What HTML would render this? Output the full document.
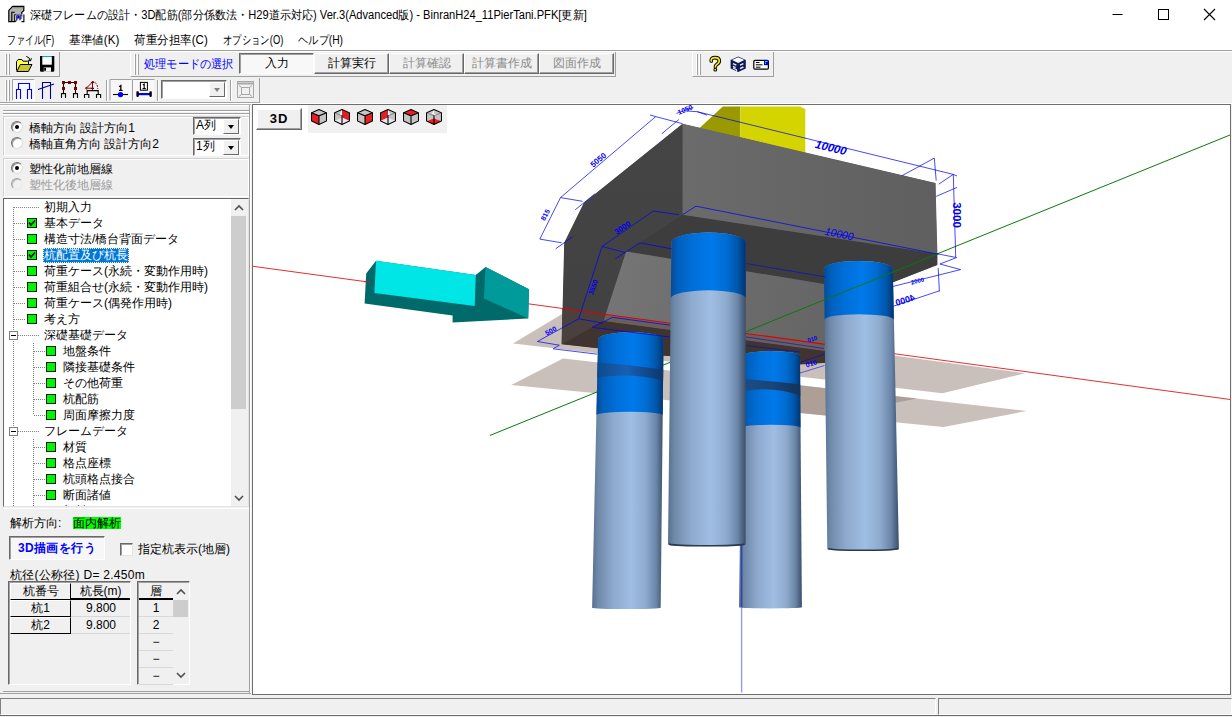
<!DOCTYPE html>
<html lang="ja">
<head>
<meta charset="utf-8">
<title>深礎フレームの設計・3D配筋</title>
<style>
*{box-sizing:border-box;margin:0;padding:0}
html,body{width:1232px;height:717px;overflow:hidden;background:#f0f0f0;font-family:"Liberation Sans",sans-serif;font-size:12px;color:#000}
.abs{position:absolute}
#titlebar{position:absolute;left:0;top:0;width:1232px;height:30px;background:#fff}
#titletext{position:absolute;left:30px;top:7px;font-size:12px;line-height:16px;white-space:nowrap;transform:scaleX(0.927);transform-origin:0 0}
#menubar{position:absolute;left:0;top:30px;width:1232px;height:20px;background:#fff}
#menubar span{position:absolute;top:2px;font-size:12px;line-height:16px;white-space:nowrap;transform-origin:0 0}
.hline{position:absolute;left:0;width:1232px;height:1px}
.band{position:absolute;border-right:1px solid #a0a0a0;border-bottom:1px solid #a0a0a0}
.grip{position:absolute;width:1px;background:#a0a0a0;box-shadow:-1px 0 0 #fff}
.tbtn{position:absolute;height:21px;top:53px;font-size:12px;line-height:19px;text-align:center;background:#f0f0f0;border:1px solid;border-color:#fff #696969 #696969 #fff;box-shadow:inset -1px -1px 0 #a0a0a0;white-space:nowrap;overflow:hidden}
.tbtn.dis{color:#8a8a8a}
.tbtn.down{border-color:#696969 #fff #fff #696969;box-shadow:inset 1px 1px 0 #a0a0a0;background:#f8f8f8}
#leftpanel{position:absolute;left:0;top:105px;width:251px;height:588px;background:#f0f0f0}
.t12{position:absolute;font-size:12px;line-height:14px;white-space:nowrap}
.radio{position:absolute;width:12px;height:12px;border-radius:50%;background:#fff;border:1px solid;border-color:#707070 #dcdcdc #dcdcdc #707070;box-shadow:inset 1px 1px 0 #9a9a9a}
.radio.on::after{content:"";position:absolute;left:3px;top:3px;width:4px;height:4px;border-radius:50%;background:#000}
.radio.dis{background:#f0f0f0;border-color:#a0a0a0 #e8e8e8 #e8e8e8 #a0a0a0;box-shadow:inset 1px 1px 0 #c0c0c0}
.combo{position:absolute;height:19px;background:#fff;border:1px solid;border-color:#696969 #fff #fff #696969;box-shadow:inset 1px 1px 0 #a0a0a0}
.combo .arr{position:absolute;right:1px;top:1px;width:16px;height:15px;background:#f0f0f0;border:1px solid;border-color:#fff #696969 #696969 #fff}
.combo .arr::after{content:"";position:absolute;left:4px;top:5px;border:3px solid transparent;border-top:4px solid #000;border-bottom:0}
.combo.gray .arr::after{border-top-color:#808080}
.sunk{border:1px solid;border-color:#808080 #fff #fff #808080}
.tree .row{position:absolute;left:0;height:16px;white-space:nowrap;font-size:12px;line-height:16px}
.gsq{position:absolute;width:10px;height:10px;background:#00f400;border:1px solid #002800}
.dot-h{position:absolute;height:1px;background-image:linear-gradient(90deg,#808080 50%,transparent 50%);background-size:2px 1px}
.dot-v{position:absolute;width:1px;background-image:linear-gradient(180deg,#808080 50%,transparent 50%);background-size:1px 2px}
#view{position:absolute;left:252px;top:104px;width:979px;height:591px;background:#fff;border:1px solid #6e6e6e;overflow:hidden}
</style>
</head>
<body>
<!-- ===== title bar ===== -->
<div id="titlebar">
  <svg class="abs" style="left:6px;top:4px" width="20" height="20" viewBox="6 4 20 20">
    <path d="M8.8,21.6 V10.4 L12.6,6.3 H23.8 V10.6 L21.8,12.2 V14.8 H14.8 V21.6 Z" fill="#b4b4b4" stroke="#000" stroke-width="1.2" stroke-linejoin="miter"/>
    <path d="M12.8,6.9 H23.2 V8.2 H11.6 Z" fill="#8c8c8c"/>
    <path d="M11.8,21 V12.2 H14.8" fill="none" stroke="#000" stroke-width="1.1"/>
    <rect x="15.6" y="14.6" width="8.2" height="6.8" fill="#f6f6f6"/>
    <path d="M21.5,21.6 H23.9 V14.6 M15.2,21.6 L16.5,20.4" fill="none" stroke="#000" stroke-width="1.1"/>
    <path d="M16.8,20.2 V15.8 H18.6 V17.8 H16.8 M20,20.2 V15.8 H22.4 M20,18 H22" fill="none" stroke="#0000a0" stroke-width="1.15"/>
  </svg>
  <div id="titletext">深礎フレームの設計・3D配筋(部分係数法・H29道示対応) Ver.3(Advanced版) - BinranH24_11PierTani.PFK[更新]</div>
  <svg class="abs" style="left:1100px;top:0" width="132" height="30" viewBox="0 0 132 30">
    <path d="M12.5 14.5 H22.5" stroke="#000" stroke-width="1" fill="none"/>
    <rect x="58.5" y="9.5" width="10" height="10" stroke="#000" stroke-width="1" fill="none"/>
    <path d="M104 9 L115 20 M115 9 L104 20" stroke="#000" stroke-width="1.1" fill="none"/>
  </svg>
</div>
<!-- ===== menu bar ===== -->
<div id="menubar">
  <span style="left:7px;transform:scaleX(0.745)">ファイル(F)</span>
  <span style="left:69px;transform:scaleX(0.967)">基準値(K)</span>
  <span style="left:134px;transform:scaleX(0.962)">荷重分担率(C)</span>
  <span style="left:222.5px;transform:scaleX(0.78)">オプション(O)</span>
  <span style="left:298px;transform:scaleX(0.855)">ヘルプ(H)</span>
</div>
<div class="hline" style="top:50px;background:#a0a0a0"></div>
<div class="hline" style="top:51px;background:#fff"></div>

<!-- ===== toolbar row 1 ===== -->
<div class="band" style="left:0;top:52px;width:60px;height:25px"></div>
<div class="grip" style="left:6px;top:54px;height:21px"></div>
<div class="grip" style="left:9px;top:54px;height:21px"></div>
<div class="band" style="left:130px;top:52px;width:486px;height:25px;border-left:1px solid #fff"></div>
<div class="grip" style="left:135px;top:54px;height:21px"></div>
<div class="grip" style="left:138px;top:54px;height:21px"></div>
<div class="t12" style="left:144px;top:57px;color:#0000ff;font-size:12px;line-height:15px;transform:scaleX(0.934);transform-origin:0 0">処理モードの選択</div>
<div class="tbtn down" style="left:239px;width:75px">入力</div>
<div class="tbtn" style="left:314px;width:75px">計算実行</div>
<div class="tbtn dis" style="left:389px;width:75px">計算確認</div>
<div class="tbtn dis" style="left:464px;width:75px">計算書作成</div>
<div class="tbtn dis" style="left:539px;width:75px">図面作成</div>
<div class="band" style="left:692px;top:52px;width:82px;height:25px;border-left:1px solid #fff"></div>
<div class="grip" style="left:697px;top:54px;height:21px"></div>
<div class="grip" style="left:700px;top:54px;height:21px"></div>

<svg class="abs" style="left:0;top:50px" width="1232" height="54" viewBox="0 50 1232 54">
  <!-- open folder -->
  <path d="M16.5,70.5 V61.5 L18.2,59.5 H21.8 L23,61.2 H28.5 V64.5" fill="#ffff50" stroke="#000" stroke-width="1"/>
  <path d="M20.3,64.5 H32 L28.4,71.5 H16.8 Z" fill="#c8c828" stroke="#000" stroke-width="1"/>
  <path d="M26.3,56.4 Q29.5,57 30.3,60.6 M28.2,60.2 L30.5,60.9 L31.4,58.2" fill="none" stroke="#000" stroke-width="1"/>
  <!-- save -->
  <path d="M40,56 H54.3 V71 L53.5,71.8 H40.8 L40,71 Z" fill="#000"/>
  <rect x="42.3" y="57" width="9.5" height="7.7" fill="#fdfdfd"/>
  <rect x="42.3" y="56" width="9.5" height="1" fill="#00b0b0"/>
  <rect x="43.8" y="67.4" width="7.2" height="4.4" fill="#f4f4f4"/>
  <rect x="44.2" y="67.8" width="1.8" height="3" fill="#000"/>
  <!-- help ? -->
  <path d="M711.2,61 Q711,57.6 715,57.6 Q719.3,57.6 719.3,61 Q719.3,63 716.8,64.4 Q715.4,65.4 715.4,67" fill="none" stroke="#000" stroke-width="3.6" stroke-linecap="round"/>
  <path d="M711.2,61 Q711,57.6 715,57.6 Q719.3,57.6 719.3,61 Q719.3,63 716.8,64.4 Q715.4,65.4 715.4,67" fill="none" stroke="#ffee00" stroke-width="1.7" stroke-linecap="round"/>
  <circle cx="715.3" cy="69.7" r="1.9" fill="#000"/><circle cx="715.3" cy="69.7" r="0.9" fill="#ffee00"/>
  <!-- F8 cube -->
  <path d="M738.2,56.4 L745.8,60 V68.4 L738.2,72 L730.6,68.4 V60 Z" fill="#10185a"/>
  <path d="M738.2,57.2 L744.3,60.1 L738.2,63 L732.1,60.1 Z" fill="#fff"/>
  <path d="M733,63.6 L736.4,65.2 M733,66.4 L735.6,67.6 M740,65.2 L743.4,63.6 M740,68.6 L743.4,67" stroke="#f0f0f0" stroke-width="1.4" fill="none"/>
  <path d="M733,68 L736.5,69.8 L736.5,71.5" stroke="#f0f0f0" stroke-width="1.2" fill="none"/>
  <!-- card -->
  <rect x="753.8" y="60.4" width="14.6" height="8.8" rx="1.2" fill="#fff" stroke="#000" stroke-width="1.2"/>
  <path d="M755.8,62.5 H759.5 M755.8,64.8 H762.5 M755.8,67.2 H760.5" stroke="#000" stroke-width="1"/>
  <rect x="764" y="60.2" width="4.4" height="5" fill="#0000c0"/><rect x="765" y="61" width="2.6" height="1" fill="#00e0ff"/><rect x="765" y="62.6" width="1" height="1.4" fill="#00e0ff"/>
  <!-- row 2: checked backgrounds -->
  <rect x="12.5" y="79.5" width="22" height="21" fill="#f8f8f8" stroke="#a0a0a0" stroke-width="0"/>
  <path d="M12.5,100.5 V79.5 H34.5" fill="none" stroke="#a0a0a0" stroke-width="1"/>
  <path d="M12.5,100.5 H34.5 V79.5" fill="none" stroke="#fff" stroke-width="1"/>
  <rect x="110" y="79.5" width="21.5" height="21" fill="#f8f8f8"/>
  <path d="M110,100.5 V79.5 H131.5" fill="none" stroke="#a0a0a0" stroke-width="1"/>
  <rect x="132.5" y="79.5" width="22" height="21" fill="#f8f8f8"/>
  <path d="M132.5,100.5 V79.5 H154.5" fill="none" stroke="#a0a0a0" stroke-width="1"/>
  <!-- icon 1 -->
  <path d="M18.5,89.5 V83.5 H29.5 V89.5 M16.5,99 V89.5 H20.5 V99 M27.5,99 V89.5 H31.5 V99" fill="none" stroke="#0000ff" stroke-width="1.1"/>
  <!-- icon 2 -->
  <path d="M42.5,99 V82.5 H50.5 V99 M38,89.6 L54,84" fill="none" stroke="#000090" stroke-width="1.1"/>
  <!-- icon 3 -->
  <path d="M63.5,82.5 H75.5 M63.5,82.5 V93.6 M75.5,82.5 V93.6 M61.5,98 V93.6 H65.5 V98 M73.5,98 V93.6 H77.5 V98" fill="none" stroke="#000" stroke-width="1.1"/>
  <g fill="#800000"><rect x="62" y="81" width="3" height="3"/><rect x="68" y="81" width="3" height="3"/><rect x="74" y="81" width="3" height="3"/><rect x="62" y="87" width="3" height="3"/><rect x="74" y="87" width="3" height="3"/></g>
  <!-- icon 4 -->
  <path d="M87.2,94.5 V90.6 H98.2 V94.5 M84.5,98 V94.5 H88.8 V98 M96.5,98 V94.5 H100.6 V98" fill="none" stroke="#000" stroke-width="1.1"/>
  <path d="M92.5,81.5 V89.5 M85.5,88.2 H94 M92.5,82 L86.5,88 M91,83 L92.5,81.3 L94,83 M91,88 L92.5,89.7 L94,88 M87.2,86.8 L85.5,88.2 L87.2,89.6" fill="none" stroke="#800000" stroke-width="1"/>
  <path d="M92.5,81.5 Q97.7,82.5 97.7,89" fill="none" stroke="#800000" stroke-width="1" stroke-dasharray="2 1"/>
  <!-- separators -->
  <path d="M106.5,80 V101 M157.5,80 V101 M230.5,80 V101" stroke="#a0a0a0" stroke-width="1"/>
  <path d="M107.5,80 V101 M158.5,80 V101 M231.5,80 V101" stroke="#fff" stroke-width="1"/>
  <!-- icon 5 -->
  <path d="M113,94.5 H128" stroke="#000" stroke-width="1.1"/><circle cx="120.5" cy="94.6" r="2.7" fill="#0000ff"/>
  <path d="M119.2,86.8 L120.8,85.6 V90 M119,90.3 H122.6" fill="none" stroke="#000" stroke-width="1.3"/>
  <!-- icon 6 -->
  <rect x="140.4" y="82.4" width="7" height="7.8" fill="#fff" stroke="#000" stroke-width="1"/>
  <path d="M142.8,85 L144.2,84 V88.4 M142.6,88.6 H145.8" fill="none" stroke="#000" stroke-width="1.1"/>
  <rect x="138" y="93" width="12" height="2.2" fill="#0000ff"/><rect x="136.4" y="91.3" width="2.4" height="5.6" rx="0.8" fill="#000"/><rect x="149.4" y="91.3" width="2.4" height="5.6" rx="0.8" fill="#000"/>
  <!-- disabled icon -->
  <g stroke="#a8a8a8" fill="none" stroke-width="1">
    <rect x="237.5" y="81.5" width="16" height="16"/><path d="M237.5,83.5 H253.5" stroke-width="2"/>
    <rect x="241.5" y="87.5" width="8" height="7"/><path d="M239,85.5 L241.5,87.5 M252,85.5 L249.5,87.5 M239,96.5 L241.5,94.5 M252,96.5 L249.5,94.5"/>
  </g>
</svg>
<!-- toolbar combo -->
<div class="combo gray" style="left:161px;top:80px;width:66px;height:19px"><span class="arr" style="width:16px;height:15px"></span></div>

<!-- ===== toolbar row 2 ===== -->
<div class="band" style="left:0;top:78px;width:260px;height:25px"></div>
<div class="grip" style="left:6px;top:80px;height:21px"></div>
<div class="grip" style="left:9px;top:80px;height:21px"></div>
<div class="hline" style="top:103px;background:#fff"></div>
<div class="hline" style="top:104px;width:251px;background:#b4b4b4"></div>

<!-- ===== left panel ===== -->
<div id="leftpanel"><div class="abs" style="left:0;top:0;width:251px;height:1px;background:#fff"></div>
<div class="abs" style="left:3px;top:5px;width:247px;height:1px;background:#a0a0a0"></div>
<div class="abs" style="left:3px;top:6px;width:247px;height:1px;background:#fff"></div>
<div class="abs" style="left:3px;top:8px;width:247px;height:1px;background:#a0a0a0"></div>
<div class="abs" style="left:3px;top:9px;width:247px;height:1px;background:#fff"></div>
<div class="abs" style="left:249px;top:0;width:1px;height:588px;background:#a0a0a0"></div>
<div class="abs" style="left:250px;top:0;width:1px;height:588px;background:#fff"></div>
<div class="abs" style="left:3px;top:11px;width:246px;height:40px;border:1px solid #d0d0d0;border-right-color:#fff;border-bottom-color:#fff;box-shadow:inset 1px 1px 0 #fff"></div>
<div class="radio on" style="left:11px;top:16px"></div><div class="t12" style="left:29px;top:16px">橋軸方向 設計方向1</div>
<div class="radio" style="left:11px;top:32px"></div><div class="t12" style="left:29px;top:32px">橋軸直角方向 設計方向2</div>
<div class="combo" style="left:193px;top:12px;width:48px;height:18px"><span class="t12" style="left:2px;top:0px">A列</span><span class="arr"></span></div>
<div class="combo" style="left:193px;top:33px;width:48px;height:18px"><span class="t12" style="left:2px;top:0px">1列</span><span class="arr"></span></div>
<div class="abs" style="left:3px;top:53px;width:246px;height:39px;border:1px solid #d0d0d0;border-right-color:#fff;border-bottom-color:#fff;box-shadow:inset 1px 1px 0 #fff"></div>
<div class="radio on" style="left:11px;top:57px"></div><div class="t12" style="left:29px;top:57px">塑性化前地層線</div>
<div class="radio dis" style="left:11px;top:73px"></div><div class="t12" style="left:29px;top:73px;color:#9a9a9a">塑性化後地層線</div>
<div class="abs tree" style="left:3px;top:93px;width:246px;height:309px;background:#fff;border:1px solid;border-color:#696969 #e3e3e3 #e3e3e3 #696969;overflow:hidden">
<div class="dot-v" style="left:9px;top:8px;height:320px"></div>
<div class="dot-v" style="left:29px;top:144px;height:72px"></div>
<div class="dot-v" style="left:29px;top:240px;height:80px"></div>
<div class="dot-h" style="left:10px;top:8px;width:26px"></div>
<div class="row" style="left:40px;top:0px">初期入力</div>
<div class="dot-h" style="left:10px;top:24px;width:12px"></div>
<div class="gsq" style="left:23px;top:19px"></div>
<svg class="abs" style="left:23px;top:19px" width="10" height="10" viewBox="0 0 10 10"><path d="M2,4.5 L4,7 L8,2.5" stroke="#000" stroke-width="1.6" fill="none"/></svg>
<div class="row" style="left:40px;top:16px">基本データ</div>
<div class="dot-h" style="left:10px;top:40px;width:12px"></div>
<div class="gsq" style="left:23px;top:35px"></div>
<div class="row" style="left:40px;top:32px">構造寸法/橋台背面データ</div>
<div class="dot-h" style="left:10px;top:56px;width:12px"></div>
<div class="gsq" style="left:23px;top:51px"></div>
<svg class="abs" style="left:23px;top:51px" width="10" height="10" viewBox="0 0 10 10"><path d="M2,4.5 L4,7 L8,2.5" stroke="#000" stroke-width="1.6" fill="none"/></svg>
<div class="row" style="left:39px;top:49px;height:15px;line-height:15px;background:#0078d7;color:#fff;padding:0 1px;outline:1px dotted #fff;outline-offset:-1px">杭配置及び杭長</div>
<div class="dot-h" style="left:10px;top:72px;width:12px"></div>
<div class="gsq" style="left:23px;top:67px"></div>
<div class="row" style="left:40px;top:64px">荷重ケース(永続・変動作用時)</div>
<div class="dot-h" style="left:10px;top:88px;width:12px"></div>
<div class="gsq" style="left:23px;top:83px"></div>
<div class="row" style="left:40px;top:80px">荷重組合せ(永続・変動作用時)</div>
<div class="dot-h" style="left:10px;top:104px;width:12px"></div>
<div class="gsq" style="left:23px;top:99px"></div>
<div class="row" style="left:40px;top:96px">荷重ケース(偶発作用時)</div>
<div class="dot-h" style="left:10px;top:120px;width:12px"></div>
<div class="gsq" style="left:23px;top:115px"></div>
<div class="row" style="left:40px;top:112px">考え方</div>
<div class="dot-h" style="left:14px;top:136px;width:22px"></div>
<div class="abs" style="left:5px;top:132px;width:9px;height:9px;background:#fff;border:1px solid #808080"></div><div class="abs" style="left:7px;top:136px;width:5px;height:1px;background:#000"></div>
<div class="row" style="left:40px;top:128px">深礎基礎データ</div>
<div class="dot-h" style="left:30px;top:152px;width:11px"></div>
<div class="gsq" style="left:42px;top:147px"></div>
<div class="row" style="left:59px;top:144px">地盤条件</div>
<div class="dot-h" style="left:30px;top:168px;width:11px"></div>
<div class="gsq" style="left:42px;top:163px"></div>
<div class="row" style="left:59px;top:160px">隣接基礎条件</div>
<div class="dot-h" style="left:30px;top:184px;width:11px"></div>
<div class="gsq" style="left:42px;top:179px"></div>
<div class="row" style="left:59px;top:176px">その他荷重</div>
<div class="dot-h" style="left:30px;top:200px;width:11px"></div>
<div class="gsq" style="left:42px;top:195px"></div>
<div class="row" style="left:59px;top:192px">杭配筋</div>
<div class="dot-h" style="left:30px;top:216px;width:11px"></div>
<div class="gsq" style="left:42px;top:211px"></div>
<div class="row" style="left:59px;top:208px">周面摩擦力度</div>
<div class="dot-h" style="left:14px;top:232px;width:22px"></div>
<div class="abs" style="left:5px;top:228px;width:9px;height:9px;background:#fff;border:1px solid #808080"></div><div class="abs" style="left:7px;top:232px;width:5px;height:1px;background:#000"></div>
<div class="row" style="left:40px;top:224px">フレームデータ</div>
<div class="dot-h" style="left:30px;top:248px;width:11px"></div>
<div class="gsq" style="left:42px;top:243px"></div>
<div class="row" style="left:59px;top:240px">材質</div>
<div class="dot-h" style="left:30px;top:264px;width:11px"></div>
<div class="gsq" style="left:42px;top:259px"></div>
<div class="row" style="left:59px;top:256px">格点座標</div>
<div class="dot-h" style="left:30px;top:280px;width:11px"></div>
<div class="gsq" style="left:42px;top:275px"></div>
<div class="row" style="left:59px;top:272px">杭頭格点接合</div>
<div class="dot-h" style="left:30px;top:296px;width:11px"></div>
<div class="gsq" style="left:42px;top:291px"></div>
<div class="row" style="left:59px;top:288px">断面諸値</div>
<div class="dot-h" style="left:30px;top:312px;width:11px"></div>
<div class="gsq" style="left:42px;top:307px"></div>
<div class="row" style="left:59px;top:304px">部材</div>
<div class="abs" style="left:227px;top:0;width:17px;height:307px;background:#f0f0f0"></div>
<div class="abs" style="left:227px;top:17px;width:15px;height:193px;background:#cdcdcd"></div>
<svg class="abs" style="left:230px;top:5px" width="10" height="7" viewBox="0 0 10 7"><path d="M1,6 L5,2 L9,6" stroke="#505050" stroke-width="1.6" fill="none"/></svg>
<svg class="abs" style="left:230px;top:296px" width="10" height="7" viewBox="0 0 10 7"><path d="M1,1 L5,5 L9,1" stroke="#505050" stroke-width="1.6" fill="none"/></svg>
</div>
<div class="abs" style="left:3px;top:403px;width:246px;height:1px;background:#fff"></div>
<div class="t12" style="left:10px;top:411px">解析方向:</div>
<div class="t12" style="left:73px;top:412px;background:#00ff00;height:12px;line-height:12px">面内解析</div>
<div class="abs" style="left:9px;top:431px;width:96px;height:24px;background:#f7f7f7;border:1px solid;border-color:#696969 #fff #fff #696969;box-shadow:inset 1px 1px 0 #a0a0a0;color:#0000ff;font-weight:bold;font-size:12px;line-height:22px;text-align:center;white-space:nowrap;letter-spacing:0.4px">3D描画を行う</div>
<div class="abs" style="left:120px;top:438px;width:13px;height:13px;background:#fff;border:1px solid;border-color:#696969 #e3e3e3 #e3e3e3 #696969;box-shadow:inset 1px 1px 0 #a0a0a0"></div>
<div class="t12" style="left:138px;top:437px">指定杭表示(地層)</div>
<div class="t12" style="left:10px;top:463px;letter-spacing:0.27px">杭径(公称径) D= 2.450m</div>
<div class="abs" style="left:8px;top:476px;width:123px;height:104px;background:#f0f0f0;border:1px solid;border-color:#696969 #fff #fff #696969;box-shadow:inset 1px 1px 0 #a0a0a0"></div>
<div class="abs" style="left:10px;top:478px;width:61px;height:17px;border:1px solid;border-color:#fff #000 #000 #fff;background:#f0f0f0;font-size:12px;line-height:15px;text-align:center;white-space:nowrap">杭番号</div>
<div class="abs" style="left:71px;top:478px;width:59px;height:17px;border-top:1px solid transparent;border-bottom:1px solid #d8d8d8;background:#f0f0f0;font-size:12px;line-height:15px;text-align:center;white-space:nowrap">杭長(m)</div>
<div class="abs" style="left:71px;top:493px;width:59px;height:2px;background:#000"></div>
<div class="abs" style="left:10px;top:495px;width:61px;height:17px;border:1px solid;border-color:#fff #000 #000 #fff;background:#f0f0f0;font-size:12px;line-height:15px;text-align:center;white-space:nowrap">杭1</div>
<div class="abs" style="left:71px;top:495px;width:59px;height:17px;border-top:1px solid transparent;border-bottom:1px solid #d8d8d8;background:#f0f0f0;font-size:12px;line-height:15px;text-align:right;padding-right:14px;white-space:nowrap">9.800</div>
<div class="abs" style="left:10px;top:512px;width:61px;height:17px;border:1px solid;border-color:#fff #000 #000 #fff;background:#f0f0f0;font-size:12px;line-height:15px;text-align:center;white-space:nowrap">杭2</div>
<div class="abs" style="left:71px;top:512px;width:59px;height:17px;border-top:1px solid transparent;border-bottom:1px solid #d8d8d8;background:#f0f0f0;font-size:12px;line-height:15px;text-align:right;padding-right:14px;white-space:nowrap">9.800</div>
<div class="abs" style="left:137px;top:476px;width:53px;height:104px;background:#f0f0f0;border:1px solid;border-color:#696969 #fff #fff #696969;box-shadow:inset 1px 1px 0 #a0a0a0"></div>
<div class="abs" style="left:139px;top:478px;width:34px;height:17px;border-top:1px solid transparent;border-bottom:1px solid #d8d8d8;background:#f0f0f0;font-size:12px;line-height:15px;text-align:center;white-space:nowrap">層</div>
<div class="abs" style="left:139px;top:493px;width:34px;height:2px;background:#000"></div>
<div class="abs" style="left:139px;top:495px;width:34px;height:17px;border-top:1px solid transparent;border-bottom:1px solid #d8d8d8;background:#f0f0f0;font-size:12px;line-height:15px;text-align:center;white-space:nowrap">1</div>
<div class="abs" style="left:139px;top:512px;width:34px;height:17px;border-top:1px solid transparent;border-bottom:1px solid #d8d8d8;background:#f0f0f0;font-size:12px;line-height:15px;text-align:center;white-space:nowrap">2</div>
<div class="abs" style="left:139px;top:529px;width:34px;height:17px;border-top:1px solid transparent;border-bottom:1px solid #d8d8d8;background:#f0f0f0;font-size:12px;line-height:15px;text-align:center;white-space:nowrap">−</div>
<div class="abs" style="left:139px;top:546px;width:34px;height:17px;border-top:1px solid transparent;border-bottom:1px solid #d8d8d8;background:#f0f0f0;font-size:12px;line-height:15px;text-align:center;white-space:nowrap">−</div>
<div class="abs" style="left:139px;top:563px;width:34px;height:17px;border-top:1px solid transparent;border-bottom:1px solid #d8d8d8;background:#f0f0f0;font-size:12px;line-height:15px;text-align:center;white-space:nowrap">−</div>
<div class="abs" style="left:173px;top:495px;width:15px;height:17px;background:#cdcdcd"></div>
<svg class="abs" style="left:176px;top:483px" width="10" height="7" viewBox="0 0 10 7"><path d="M1,6 L5,2 L9,6" stroke="#505050" stroke-width="1.6" fill="none"/></svg>
<svg class="abs" style="left:176px;top:567px" width="10" height="7" viewBox="0 0 10 7"><path d="M1,1 L5,5 L9,1" stroke="#505050" stroke-width="1.6" fill="none"/></svg>
<div class="abs" style="left:3px;top:586px;width:247px;height:1px;background:#a0a0a0"></div>
<div class="abs" style="left:0px;top:588px;width:251px;height:1px;background:#a0a0a0"></div></div>

<!-- ===== 3D view ===== -->
<div id="view"><svg class="abs" style="left:-253px;top:-105px" width="1232" height="717" viewBox="0 0 1232 717">
<defs>
  <linearGradient id="gL" x1="0" x2="1" y1="0" y2="0">
    <stop offset="0" stop-color="#587090"/><stop offset="0.08" stop-color="#6e88a8"/><stop offset="0.3" stop-color="#8eaace"/>
    <stop offset="0.55" stop-color="#9fbee3"/><stop offset="0.75" stop-color="#8eabce"/><stop offset="0.9" stop-color="#6984a6"/><stop offset="1" stop-color="#3a4e6a"/>
  </linearGradient>
  <linearGradient id="gB" x1="0" x2="1" y1="0" y2="0">
    <stop offset="0" stop-color="#084a94"/><stop offset="0.1" stop-color="#0060be"/><stop offset="0.3" stop-color="#006fd9"/>
    <stop offset="0.55" stop-color="#0079ea"/><stop offset="0.75" stop-color="#006cd2"/><stop offset="0.9" stop-color="#0054a6"/><stop offset="1" stop-color="#003470"/>
  </linearGradient>
  <linearGradient id="gBd" x1="0" x2="1" y1="0" y2="0">
    <stop offset="0" stop-color="#0e4a8c"/><stop offset="0.45" stop-color="#1860b4"/><stop offset="1" stop-color="#0c3668"/>
  </linearGradient>
  <linearGradient id="gBd2" x1="0" x2="1" y1="0" y2="0">
    <stop offset="0" stop-color="#1c4c86"/><stop offset="0.5" stop-color="#1a4678"/><stop offset="1" stop-color="#12325a"/>
  </linearGradient>
  <linearGradient id="gFront" x1="0" x2="1" y1="0" y2="0">
    <stop offset="0" stop-color="#6b6b6b"/><stop offset="1" stop-color="#5f5f5f"/>
  </linearGradient>
  <linearGradient id="gTrap" gradientUnits="userSpaceOnUse" x1="605" y1="250" x2="870" y2="300">
    <stop offset="0" stop-color="#767676"/><stop offset="0.4" stop-color="#6d6d6d"/><stop offset="1" stop-color="#636363"/>
  </linearGradient>
  <linearGradient id="gLeft" x1="0" x2="0" y1="0" y2="1">
    <stop offset="0" stop-color="#454545"/><stop offset="1" stop-color="#414141"/>
  </linearGradient>
</defs>
<!-- ground planes -->
<polygon points="513,343.4 566.7,311.3 1025.3,373.2 942.4,393.2" fill="rgb(150,130,120)" fill-opacity="0.5"/>
<polygon points="511.2,385 563,358.6 1026.6,411 943.6,427" fill="rgb(150,130,120)" fill-opacity="0.5"/>
<polygon points="746,379.3 895.3,396.1 917,398.6 830,415.9 746,407.8" fill="rgb(150,130,120)" fill-opacity="0.55"/>
<!-- axes -->
<line x1="253" y1="266.3" x2="1231" y2="399.6" stroke="#e01818" stroke-width="1" stroke-opacity="0.9"/>
<line x1="489.8" y1="435.5" x2="1231" y2="134.6" stroke="#0a7a0a" stroke-width="1"/>
<line x1="741.6" y1="545" x2="741.6" y2="692.5" stroke="#9a9ae0" stroke-width="1.4"/>
<!-- yellow column -->
<polygon points="722.8,106.5 740.4,106.5 740.4,138 699.6,128" fill="#9a9a00"/>
<polygon points="740.4,106.5 800,106.5 805.3,109 805.3,153 740.4,138" fill="#d4d400"/>
<!-- cap -->
<polygon points="682.6,124 584.2,203.1 564.6,243 562.2,344 664,355.5 800,364 869,359.5 869.3,291.5 937,264.8 935.3,183.3" fill="#484848"/>
<polygon points="682.6,123.7 583.8,202.9 564.2,242.8 561.7,344.2 603.5,321 626.2,251.4 682.6,214.7" fill="url(#gLeft)"/>
<polygon points="682.6,214.7 937.4,253.8 937.4,265 869.3,291.5 626.2,251.4" fill="#3d3d3d"/>
<polygon points="682.6,123.7 935.5,183 937.4,253.8 682.6,214.7" fill="url(#gFront)"/>
<polygon points="626.2,251.4 869.3,291.5 869,357 603.5,321" fill="url(#gTrap)"/>
<polygon points="605.6,314.9 869,351.4 869,357 603.5,321" fill="#6a5f5a"/>
<polygon points="561.7,344.2 600.7,322.3 603.5,321 869,357 869,360 800,364.5 664,355.7" fill="#3f3430"/>
<polygon points="562.3,308.5 605.6,314.9 603.5,321 600.7,322.3 561.7,344.2" fill="#4a413e"/>
<line x1="562.3" y1="308.5" x2="869" y2="350.3" stroke="#e00000" stroke-width="1.2"/>
<line x1="745.9" y1="331.7" x2="824.7" y2="299.7" stroke="#0a7a0a" stroke-width="1"/>
<path d="M742.5,355.5 A28.8,4.7 0 0 1 800.0,355.5 L801.9,607.2 A31.4,1.2 0 0 1 739.0,607.2 Z" fill="url(#gL)"/>
<path d="M742.5,355.5 A28.8,4.7 0 0 1 800.0,355.5 L800.5,427.5 A29.5,2.7 0 0 0 741.5,427.5 Z" fill="url(#gB)"/>
<path d="M742.2,379.3 Q771.2,380.7 800.2,384.4 L800.3,395.4 Q771.2,385.4 742.0,391.5 Z" fill="url(#gBd2)"/>
<line x1="741.6" y1="545" x2="741.6" y2="607" stroke="#3344b0" stroke-width="1.6"/>
<path d="M823.9,268.6 A34.4,7.6 0 0 1 892.8,268.6 L898.9,549.2 A35.8,1.4 0 0 1 827.3,549.2 Z" fill="url(#gL)"/>
<path d="M823.9,268.6 A34.4,7.6 0 0 1 892.8,268.6 L893.9,319.8 A34.7,5.6 0 0 0 824.5,319.8 Z" fill="url(#gB)"/>
<path d="M828.3,548.7 A35.8,2.0 0 0 0 897.9,548.7" fill="none" stroke="#2a3a52" stroke-width="1.6"/>
<line x1="824" y1="300" x2="938" y2="253.7" stroke="#0a7a0a" stroke-width="1"/>
<path d="M598.1,339.2 A32.7,7.0 0 0 1 663.5,339.2 L660.7,607.8 A34.3,1.2 0 0 1 592.1,607.8 Z" fill="url(#gL)"/>
<path d="M598.1,339.2 A32.7,7.0 0 0 1 663.5,339.2 L662.7,414.9 A33.2,3.3 0 0 0 596.4,414.9 Z" fill="url(#gB)"/>
<path d="M597.6,362.2 Q630.4,364.7 663.2,369.6 L663.1,380.6 Q630.2,372.2 597.2,377.8 Z" fill="url(#gBd)"/>
<path d="M671.4,242.0 A37.2,10.0 0 0 1 745.7,242.0 L745.6,544.6 A38.8,1.6 0 0 1 668.0,544.6 Z" fill="url(#gL)"/>
<path d="M671.4,242.0 A37.2,10.0 0 0 1 745.7,242.0 L745.7,298.0 A37.5,8.1 0 0 0 670.8,298.0 Z" fill="url(#gB)"/>
<path d="M669.0,544.1 A38.8,2.2 0 0 0 744.6,544.1" fill="none" stroke="#2a3a52" stroke-width="1.6"/>
<!-- cyan arrow -->
<polygon points="376,260.7 366.2,273.4 364.6,303.4 452.6,315.6 452.6,322.6 528.2,318.4 529,289.2 485.6,266.9 475.8,275" fill="#006a6a"/>
<polygon points="376,260.7 475.8,275 474.7,305.9 374.4,292.9" fill="#00e6e6"/>
<polygon points="485.6,266.9 529,289.2 528.2,318.4 483.9,298.6" fill="#009a9a"/>
<line x1="364" y1="281.5" x2="370.3" y2="282.3" stroke="#e01818" stroke-width="1"/>
<!-- dimension lines -->
<g stroke="#0000f0" stroke-width="0.9" fill="none" stroke-opacity="0.8">
  <path d="M655.7,116.6 L560.5,197.6 M655.7,116.6 L682.6,123.7 M661.8,133.7 L678.9,119.5 M676.5,113.4 L693.5,107.3 M655.7,116.6 L650,115"/>
  <path d="M560.5,197.6 L539.8,239.1 M560.5,197.6 L582.5,201.3 M539.8,239.1 L561.7,242.8 M555.6,248.9 L572.7,236.7 M575.2,209.8 L594.7,194"/>
  <path d="M697.2,111.7 L953.3,174.4 M687,111 L697.2,111.7 L707,115.1 M934.3,158.1 L936.2,180.5 M902,175.7 L934.3,158.1 M953.3,174.4 L955.7,257.4 M936.2,196.4 L957,187.4 M938.7,184.2 L953.3,174.4 L957,176"/>
  <path d="M937.4,253.8 L955.7,257.4 M939.9,264 L957,257.4 M939.9,264 L960.6,269.6 M938.2,267.9 L939.4,291.5 M893.5,306.2 L939.4,290.8 M892.3,286.6 L960.6,269.6"/>
  <path d="M653.3,211 L602,246.5 M653.3,211 L678.9,214.7 M602,246.5 L625.2,252.5 M615.4,258.7 L639.8,242.8 L671.6,248.9"/>
  <path d="M682.6,214.7 L696,206.2 L938.6,254.3"/>
  <path d="M602,246.5 L578.7,318.8 L602.8,323 M578.7,318.8 L537.4,341.5 L559.3,345.2 L553.2,348.8 L597.2,354.2 M592.3,327.3 L613,317.1 M592.3,327.3 L626.4,331.7 L670,337 M613,317.4 L670,325.2"/>
  <path d="M746,263.5 L825.3,276.9 M746,337 L824,348.5 M746,345.5 L800,352 M800,362.5 L824.5,354 M800,373 L824.5,365.5" stroke-width="0.7"/>
</g>
<g fill="#0000f0" font-family="Liberation Sans, sans-serif" font-weight="bold" font-size="8" text-anchor="middle">
  <text transform="translate(830,151.5) rotate(14)" font-size="11.5" font-style="italic">10000</text>
  <text transform="translate(838.5,237.5) rotate(11)" font-size="10.5" font-style="italic" font-weight="normal">10000</text>
  <text transform="translate(953.3,215) rotate(90)" font-size="11.5">3000</text>
  <text transform="translate(906,303) rotate(-17) scale(-1,1)" font-size="9">4000</text>
  <text transform="translate(918,283) rotate(-15)" font-size="6">2000</text>
  <text transform="translate(600,162) rotate(-40)" font-size="8">5050</text>
  <text transform="translate(547.5,216) rotate(-62)" font-size="7">815</text>
  <text transform="translate(624,230) rotate(-34)" font-size="8">3000</text>
  <text transform="translate(595.5,288) rotate(-70)" font-size="7">3550</text>
  <text transform="translate(552,333) rotate(-28)" font-size="7">500</text>
  <text transform="translate(686,112) rotate(-22)" font-size="7">1050</text>
  <text transform="translate(813,341) rotate(-18)" font-size="6">010</text>
  <text transform="translate(812,366) rotate(-18)" font-size="7">010</text>
</g>

</svg>
<div class="abs" style="left:3px;top:3px;width:46px;height:22px;background:#f0f0f0;border:1px solid;border-color:#fff #696969 #696969 #fff;box-shadow:inset -1px -1px 0 #a0a0a0,inset 1px 1px 0 #fff;font-weight:bold;font-size:13px;line-height:19px;text-align:center;letter-spacing:1px">3D</div>
<div class="abs" style="left:55px;top:0;width:139px;height:28px;background:#f0f0f0"></div>
<svg class="abs" style="left:58px;top:4px" width="16" height="16" viewBox="0 0 16 16"><polygon points="8,0.5 15.5,3.8 8,6.8 0.5,3.8" fill="#c4c4c4"/><polygon points="0.5,3.8 8,6.8 8,15.5 0.5,12" fill="#ec1c24"/><polygon points="15.5,3.8 8,6.8 8,15.5 15.5,12" fill="#c4c4c4"/><path d="M8,0.5 L15.5,3.8 L15.5,12 L8,15.5 L0.5,12 L0.5,3.8 Z" fill="none" stroke="#000" stroke-width="1.1"/><path d="M0.5,3.8 L8,6.8 L15.5,3.8 M8,6.8 L8,15.5" fill="none" stroke="#000" stroke-width="1.1"/></svg>
<svg class="abs" style="left:81px;top:4px" width="16" height="16" viewBox="0 0 16 16"><polygon points="8,0.5 15.5,3.8 8,6.8 0.5,3.8" fill="#c4c4c4"/><polygon points="0.5,3.8 8,6.8 8,15.5 0.5,12" fill="#c4c4c4"/><polygon points="15.5,3.8 8,6.8 8,15.5 15.5,12" fill="#c4c4c4"/><polygon points="8,0.5 15.5,3.8 15.5,12 8,8.5" fill="#ec1c24"/><polygon points="8,0.5 8,8.5 6,5" fill="#fff"/><polygon points="8,8.5 15.5,12 8,15.5 0.5,12" fill="#e8e8e8"/><path d="M8,0.5 L15.5,3.8 L15.5,12 L8,15.5 L0.5,12 L0.5,3.8 Z" fill="none" stroke="#000" stroke-width="1.1"/><path d="M8,6 L8,15.5" fill="none" stroke="#000" stroke-width="1.1"/><path d="M0.5,3.8 L8,6.8 L15.5,3.8" fill="none" stroke="#555" stroke-width="0.6"/></svg>
<svg class="abs" style="left:104px;top:4px" width="16" height="16" viewBox="0 0 16 16"><polygon points="8,0.5 15.5,3.8 8,6.8 0.5,3.8" fill="#c4c4c4"/><polygon points="0.5,3.8 8,6.8 8,15.5 0.5,12" fill="#c4c4c4"/><polygon points="15.5,3.8 8,6.8 8,15.5 15.5,12" fill="#ec1c24"/><path d="M8,0.5 L15.5,3.8 L15.5,12 L8,15.5 L0.5,12 L0.5,3.8 Z" fill="none" stroke="#000" stroke-width="1.1"/><path d="M0.5,3.8 L8,6.8 L15.5,3.8 M8,6.8 L8,15.5" fill="none" stroke="#000" stroke-width="1.1"/></svg>
<svg class="abs" style="left:127px;top:4px" width="16" height="16" viewBox="0 0 16 16"><polygon points="8,0.5 15.5,3.8 8,6.8 0.5,3.8" fill="#c4c4c4"/><polygon points="0.5,3.8 8,6.8 8,15.5 0.5,12" fill="#c4c4c4"/><polygon points="15.5,3.8 8,6.8 8,15.5 15.5,12" fill="#c4c4c4"/><polygon points="8,0.5 0.5,3.8 0.5,12 8,8.5" fill="#ec1c24"/><polygon points="8,0.5 8,8.5 10,5" fill="#fff"/><polygon points="8,8.5 15.5,12 8,15.5 0.5,12" fill="#e8e8e8"/><path d="M8,0.5 L15.5,3.8 L15.5,12 L8,15.5 L0.5,12 L0.5,3.8 Z" fill="none" stroke="#000" stroke-width="1.1"/><path d="M8,6 L8,15.5" fill="none" stroke="#000" stroke-width="1.1"/><path d="M0.5,3.8 L8,6.8 L15.5,3.8" fill="none" stroke="#555" stroke-width="0.6"/></svg>
<svg class="abs" style="left:150px;top:4px" width="16" height="16" viewBox="0 0 16 16"><polygon points="8,0.5 15.5,3.8 8,6.8 0.5,3.8" fill="#ec1c24"/><polygon points="0.5,3.8 8,6.8 8,15.5 0.5,12" fill="#c4c4c4"/><polygon points="15.5,3.8 8,6.8 8,15.5 15.5,12" fill="#c4c4c4"/><path d="M8,0.5 L15.5,3.8 L15.5,12 L8,15.5 L0.5,12 L0.5,3.8 Z" fill="none" stroke="#000" stroke-width="1.1"/><path d="M0.5,3.8 L8,6.8 L15.5,3.8 M8,6.8 L8,15.5" fill="none" stroke="#000" stroke-width="1.1"/></svg>
<svg class="abs" style="left:173px;top:4px" width="16" height="16" viewBox="0 0 16 16"><polygon points="8,0.5 15.5,3.8 8,6.8 0.5,3.8" fill="#c4c4c4"/><polygon points="0.5,3.8 8,6.8 8,15.5 0.5,12" fill="#c4c4c4"/><polygon points="15.5,3.8 8,6.8 8,15.5 15.5,12" fill="#c4c4c4"/><polygon points="8,0.5 8,8.5 10,5 6,5" fill="#fff"/><polygon points="8,9.5 15.5,12.2 8,15.5 0.5,12.2" fill="#ec1c24"/><path d="M8,0.5 L15.5,3.8 L15.5,12 L8,15.5 L0.5,12 L0.5,3.8 Z" fill="none" stroke="#000" stroke-width="1.1"/><path d="M8,6 L8,15.5" fill="none" stroke="#000" stroke-width="1.1"/><path d="M0.5,3.8 L8,6.8 L15.5,3.8" fill="none" stroke="#555" stroke-width="0.6"/></svg>
</div>

<!-- ===== status bar ===== -->
<div class="abs sunk" style="left:0;top:698px;width:936px;height:17px"></div>
<div class="abs sunk" style="left:938px;top:698px;width:294px;height:17px"></div>
<div class="hline" style="top:715px;background:#696969"></div>
</body>
</html>
